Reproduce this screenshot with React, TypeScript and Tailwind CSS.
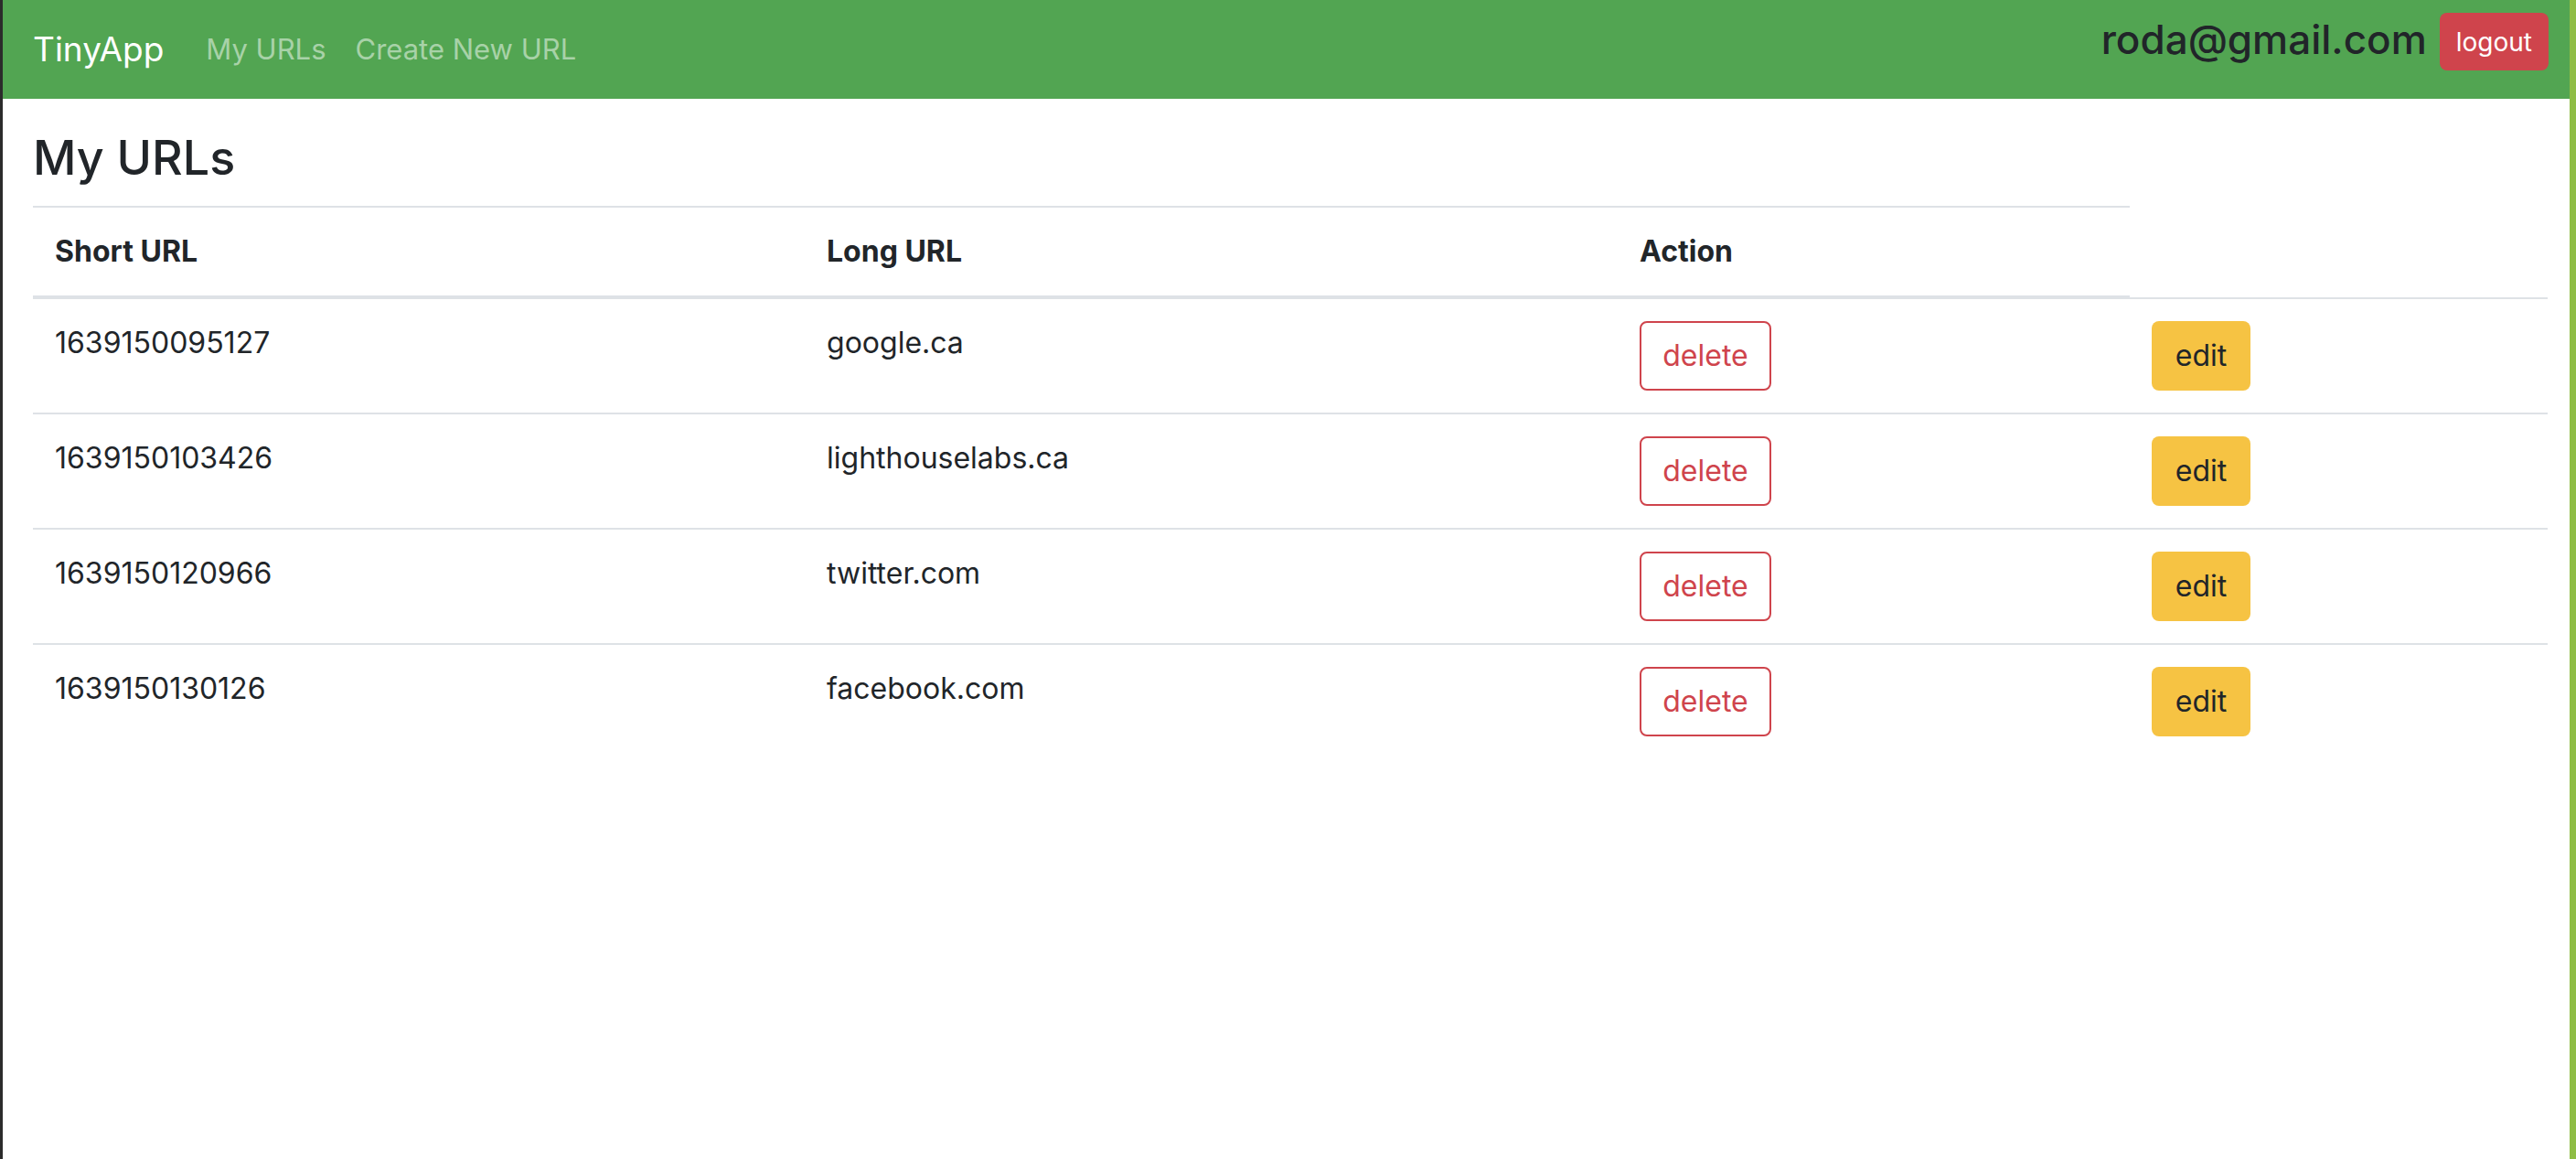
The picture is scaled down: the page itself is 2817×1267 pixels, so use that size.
import React from 'react';

type ShortUrl = {
  id: string;
  longUrl: string;
};

const urls: ShortUrl[] = [
  { id: '1639150095127', longUrl: 'google.ca' },
  { id: '1639150103426', longUrl: 'lighthouselabs.ca' },
  { id: '1639150120966', longUrl: 'twitter.com' },
  { id: '1639150130126', longUrl: 'facebook.com' },
];

const Navbar: React.FC = () => (
  <nav className="flex h-[108px] bg-[#52a552] pl-[33px] pr-[23px]">
    <div className="flex h-full items-center">
      <a className="text-[37px] leading-[48px] text-white">TinyApp</a>
      <a className="ml-[46px] text-[31px] leading-[48px] text-[#a8d2a8]">My URLs</a>
      <a className="ml-[32px] text-[31px] leading-[48px] text-[#a8d2a8]">Create New URL</a>
    </div>
    <div className="ml-auto flex items-start gap-[14px] pt-[14px]">
      <h4 className="text-[44px] font-medium leading-[58px] text-[#212529]">roda@gmail.com</h4>
      <button className="h-[63px] rounded-[8px] bg-[#cf444c] px-[18px] text-[28px] leading-[42px] text-white">
        logout
      </button>
    </div>
  </nav>
);

const UrlTable: React.FC = () => {
  const th = 'border-y-2 border-[#dee2e6] px-[24px] py-[24px] text-[32px] font-bold leading-[48px]';
  const td = 'border-t-2 border-[#dee2e6] px-[24px] py-[24px] text-[32px] leading-[48px]';

  return (
    <div className="grid grid-cols-[844px_889px_560px_1fr]">
      <div className={th}>Short URL</div>
      <div className={th}>Long URL</div>
      <div className={th}>Action</div>
      <div />

      {urls.map((url) => (
        <React.Fragment key={url.id}>
          <div className={td}>{url.id}</div>
          <div className={td}>{url.longUrl}</div>
          <div className={td}>
            <button className="h-[76px] w-[144px] rounded-[8px] border-2 border-[#cf444c] bg-white text-[32px] leading-[48px] text-[#cf444c]">
              delete
            </button>
          </div>
          <div className={td}>
            <button className="h-[76px] w-[108px] rounded-[8px] bg-[#f6c343] text-[32px] leading-[48px] text-[#212529]">
              edit
            </button>
          </div>
        </React.Fragment>
      ))}
    </div>
  );
};

const App: React.FC = () => {
  return (
    <div className="flex min-h-[1267px] bg-white font-['Inter',sans-serif] text-[#212529]">
      <div className="w-[3px] shrink-0 bg-[#2b2b2b]" />
      <div className="min-w-0 flex-1">
        <Navbar />
        <main className="pl-[33px] pr-[24px]">
          <h3 className="mb-[20px] pt-[32px] text-[52px] font-medium leading-[65px]">My URLs</h3>
          <UrlTable />
        </main>
      </div>
      <div className="w-[7px] shrink-0 bg-[#8fbd45]" />
    </div>
  );
};

export default App;
